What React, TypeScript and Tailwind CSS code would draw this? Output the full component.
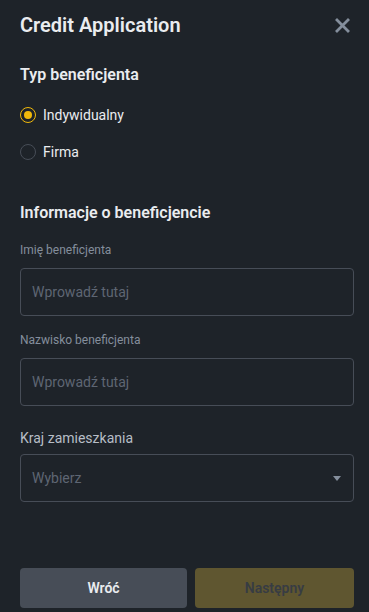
import { useState } from "react";

const Radio = (props: any) => {
    return <label className="flex items-center gap-[7px] h-6 cursor-pointer" onClick={props.onClick}>
        <span className={`flex items-center justify-center w-4 h-4 rounded-full border ${props.checked ? 'border-[#F0B90B]' : 'border-[#474D57]'}`}>
            {props.checked && <span className="w-2 h-2 rounded-full bg-[#F0B90B]"></span>}
        </span>
        <span className="text-sm text-[#EAECEF]">{props.label}</span>
    </label>
}

const TextField = (props: any) => {
    return <input
        className="w-full h-12 rounded border border-[#474D57] bg-transparent pl-[11px] pr-3 text-sm text-[#EAECEF] placeholder:text-[#5E6673] outline-none"
        placeholder="Wprowadź tutaj"
    />
}

export default function App() {
    const [type, setType] = useState("ind");
    return <div className="w-[369px] h-[612px] bg-[#1E2329] pl-5 pr-[15px] overflow-hidden" style={{ fontFamily: "Roboto, 'Noto Sans', sans-serif" }}>
        <div className="flex justify-between items-center pt-[11px] h-[39px]">
            <div className="text-xl leading-7 font-semibold text-[#EAECEF]">Credit Application</div>
            <svg width="15" height="15" viewBox="0 0 15 15" className="mr-[4px]">
                <path d="M2 2L13 13M13 2L2 13" stroke="#848E9C" strokeWidth="2.8" strokeLinecap="square" />
            </svg>
        </div>

        <div className="mt-6 text-base leading-6 font-semibold text-[#EAECEF]">Typ beneficjenta</div>
        <div className="mt-4 flex flex-col gap-[13px]">
            <Radio label="Indywidualny" checked={type === "ind"} onClick={() => setType("ind")} />
            <Radio label="Firma" checked={type === "firm"} onClick={() => setType("firm")} />
        </div>

        <div className="mt-[37px] text-base leading-6 font-semibold text-[#EAECEF]">Informacje o beneficjencie</div>
        <div className="mt-[17px] text-xs leading-4 text-[#848E9C]">Imię beneficjenta</div>
        <div className="mt-[10px]"><TextField /></div>
        <div className="mt-4 text-xs leading-4 text-[#848E9C]">Nazwisko beneficjenta</div>
        <div className="mt-[10px]"><TextField /></div>

        <div className="mt-[22px] text-sm leading-5 text-[#B7BDC6]">Kraj zamieszkania</div>
        <div className="mt-[6px] flex items-center justify-between h-12 rounded border border-[#474D57] pl-[11px] pr-[12px]">
            <span className="text-sm text-[#5E6673]">Wybierz</span>
            <svg width="8" height="5" viewBox="0 0 8 5">
                <path d="M0 0H8L4 5Z" fill="#848E9C" />
            </svg>
        </div>

        <div className="mt-[66px] flex gap-2">
            <button className="w-[167px] h-10 rounded bg-[#474D57] text-sm font-semibold text-[#EAECEF]">Wróć</button>
            <button className="flex-1 h-10 rounded bg-[#5F5630] text-sm font-semibold text-[#373C43]" disabled>Następny</button>
        </div>
    </div>
}
